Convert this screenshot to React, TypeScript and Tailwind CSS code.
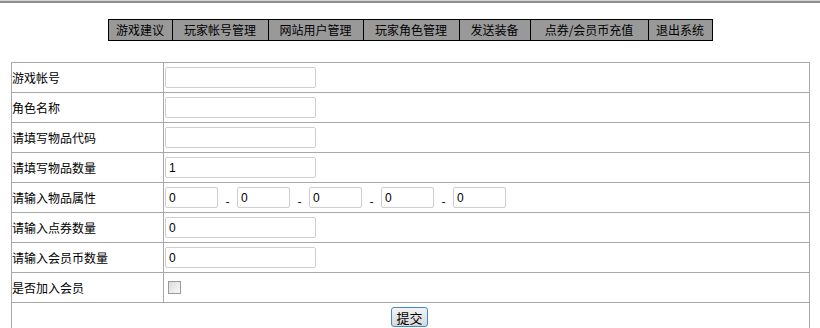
import React from "react";

const navItems: [string, number][] = [
  ["游戏建议", 64],
  ["玩家帐号管理", 96],
  ["网站用户管理", 95],
  ["玩家角色管理", 96],
  ["发送装备", 71],
  ["点券/会员币充值", 118],
  ["退出系统", 64],
];

function TextInput({ value = "", w = "w-[151px]" }: { value?: string; w?: string }) {
  return (
    <input
      defaultValue={value}
      className={`${w} h-[21px] border border-[#cfcfcf] rounded-[2px] bg-white px-[3px] text-[12px] text-black outline-none`}
      style={{ fontFamily: '"Liberation Sans", Arial, sans-serif' }}
    />
  );
}

function Row({ label, children }: { label: string; children: React.ReactNode }) {
  return (
    <div className="flex h-[30px] border-b border-[#a8a8a8]">
      <div className="w-[152px] shrink-0 border-r border-[#a8a8a8] flex items-center text-[12px] text-black">
        {label}
      </div>
      <div className="flex-1 flex items-center pl-[1px]">{children}</div>
    </div>
  );
}

export default function App() {
  const font = { fontFamily: '"Noto Sans CJK SC", "Liberation Sans", sans-serif' };
  return (
    <div className="w-[820px] h-[328px] bg-white overflow-hidden" style={font}>
      <div className="h-[3px] border-t border-[#d4d4d4] bg-[#8e8e8e]" />
      <div className="flex justify-center mt-[16px]">
        <div className="flex h-[22px] border border-black bg-[#999999]">
          {navItems.map(([t, w], i) => (
            <div
              key={t}
              className={`flex items-center justify-center text-[12px] text-black leading-none ${i > 0 ? "border-l border-black" : ""}`}
              style={{ width: w - (i > 0 ? 0 : 1) }}
            >
              {t}
            </div>
          ))}
        </div>
      </div>
      <div className="ml-[11px] mt-[21px] w-[799px] border-t border-l border-r border-[#a8a8a8]">
        <Row label="游戏帐号">
          <TextInput />
        </Row>
        <Row label="角色名称">
          <TextInput />
        </Row>
        <Row label="请填写物品代码">
          <TextInput />
        </Row>
        <Row label="请填写物品数量">
          <TextInput value="1" />
        </Row>
        <Row label="请输入物品属性">
          <div className="flex items-center">
            {[0, 1, 2, 3, 4].map((i) => (
              <React.Fragment key={i}>
                {i > 0 && (
                  <span className="w-[19px] flex justify-center text-[12px] text-black pt-[6px]">-</span>
                )}
                <TextInput value="0" w="w-[53px]" />
              </React.Fragment>
            ))}
          </div>
        </Row>
        <Row label="请输入点券数量">
          <TextInput value="0" />
        </Row>
        <Row label="请输入会员币数量">
          <TextInput value="0" />
        </Row>
        <Row label="是否加入会员">
          <input
            type="checkbox"
            className="ml-[3px] w-[13px] h-[13px] appearance-none border border-[#9a9a9a] bg-gradient-to-br from-[#dcdcdc] to-[#f8f8f8]"
          />
        </Row>
        <div className="flex justify-center h-[30px] pt-[4px] pr-[2px]">
          <button className="w-[37px] h-[20px] border border-[#3d8ec9] rounded-[3px] bg-gradient-to-b from-[#f4f4f4] to-[#d8d8d8] text-[13px] text-black leading-none flex items-center justify-center">
            提交
          </button>
        </div>
      </div>
    </div>
  );
}
